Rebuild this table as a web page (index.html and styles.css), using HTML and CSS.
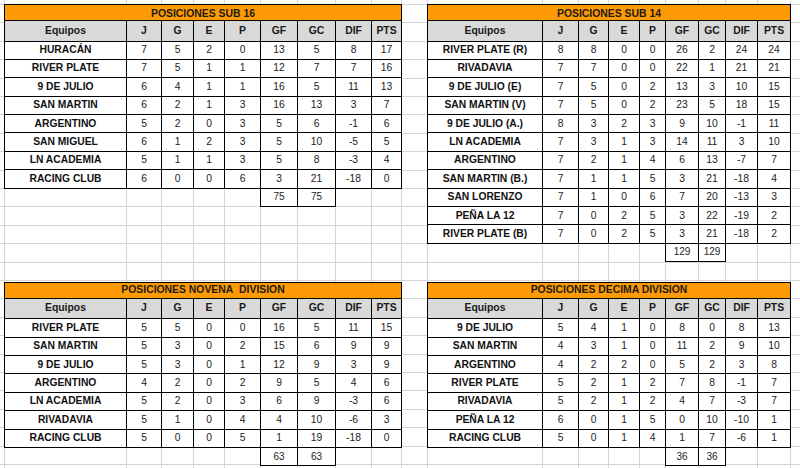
FILE: index.html
```html
<!DOCTYPE html>
<html lang="es">
<head>
<meta charset="utf-8">
<title>Posiciones</title>
<link rel="stylesheet" href="styles.css">
</head>
<body>
<main class="sheet">

  <section class="tbl tbl-l">
    <div class="title title-top">POSICIONES SUB 16</div>
    <div class="hd first">Equipos</div><div class="hd">J</div><div class="hd">G</div><div class="hd">E</div><div class="hd">P</div><div class="hd">GF</div><div class="hd">GC</div><div class="hd">DIF</div><div class="hd">PTS</div>
    <div class="nm">HURACÁN</div><div class="n">7</div><div class="n">5</div><div class="n">2</div><div class="n">0</div><div class="n">13</div><div class="n">5</div><div class="n">8</div><div class="n">17</div>
    <div class="nm">RIVER PLATE</div><div class="n">7</div><div class="n">5</div><div class="n">1</div><div class="n">1</div><div class="n">12</div><div class="n">7</div><div class="n">7</div><div class="n">16</div>
    <div class="nm">9 DE JULIO</div><div class="n">6</div><div class="n">4</div><div class="n">1</div><div class="n">1</div><div class="n">16</div><div class="n">5</div><div class="n">11</div><div class="n">13</div>
    <div class="nm">SAN MARTIN</div><div class="n">6</div><div class="n">2</div><div class="n">1</div><div class="n">3</div><div class="n">16</div><div class="n">13</div><div class="n">3</div><div class="n">7</div>
    <div class="nm">ARGENTINO</div><div class="n">5</div><div class="n">2</div><div class="n">0</div><div class="n">3</div><div class="n">5</div><div class="n">6</div><div class="n">-1</div><div class="n">6</div>
    <div class="nm">SAN MIGUEL</div><div class="n">6</div><div class="n">1</div><div class="n">2</div><div class="n">3</div><div class="n">5</div><div class="n">10</div><div class="n">-5</div><div class="n">5</div>
    <div class="nm">LN ACADEMIA</div><div class="n">5</div><div class="n">1</div><div class="n">1</div><div class="n">3</div><div class="n">5</div><div class="n">8</div><div class="n">-3</div><div class="n">4</div>
    <div class="nm">RACING CLUB</div><div class="n">6</div><div class="n">0</div><div class="n">0</div><div class="n">6</div><div class="n">3</div><div class="n">21</div><div class="n">-18</div><div class="n">0</div>
    <div class="tot tot-gf">75</div><div class="tot">75</div>
  </section>

  <section class="tbl tbl-r">
    <div class="title title-top">POSICIONES SUB 14</div>
    <div class="hd first">Equipos</div><div class="hd">J</div><div class="hd">G</div><div class="hd">E</div><div class="hd">P</div><div class="hd">GF</div><div class="hd">GC</div><div class="hd">DIF</div><div class="hd">PTS</div>
    <div class="nm">RIVER PLATE (R)</div><div class="n">8</div><div class="n">8</div><div class="n">0</div><div class="n">0</div><div class="n">26</div><div class="n">2</div><div class="n">24</div><div class="n">24</div>
    <div class="nm">RIVADAVIA</div><div class="n">7</div><div class="n">7</div><div class="n">0</div><div class="n">0</div><div class="n">22</div><div class="n">1</div><div class="n">21</div><div class="n">21</div>
    <div class="nm">9 DE JULIO (E)</div><div class="n">7</div><div class="n">5</div><div class="n">0</div><div class="n">2</div><div class="n">13</div><div class="n">3</div><div class="n">10</div><div class="n">15</div>
    <div class="nm">SAN MARTIN (V)</div><div class="n">7</div><div class="n">5</div><div class="n">0</div><div class="n">2</div><div class="n">23</div><div class="n">5</div><div class="n">18</div><div class="n">15</div>
    <div class="nm">9 DE JULIO (A.)</div><div class="n">8</div><div class="n">3</div><div class="n">2</div><div class="n">3</div><div class="n">9</div><div class="n">10</div><div class="n">-1</div><div class="n">11</div>
    <div class="nm">LN ACADEMIA</div><div class="n">7</div><div class="n">3</div><div class="n">1</div><div class="n">3</div><div class="n">14</div><div class="n">11</div><div class="n">3</div><div class="n">10</div>
    <div class="nm">ARGENTINO</div><div class="n">7</div><div class="n">2</div><div class="n">1</div><div class="n">4</div><div class="n">6</div><div class="n">13</div><div class="n">-7</div><div class="n">7</div>
    <div class="nm">SAN MARTIN (B.)</div><div class="n">7</div><div class="n">1</div><div class="n">1</div><div class="n">5</div><div class="n">3</div><div class="n">21</div><div class="n">-18</div><div class="n">4</div>
    <div class="nm">SAN LORENZO</div><div class="n">7</div><div class="n">1</div><div class="n">0</div><div class="n">6</div><div class="n">7</div><div class="n">20</div><div class="n">-13</div><div class="n">3</div>
    <div class="nm">PEÑA LA 12</div><div class="n">7</div><div class="n">0</div><div class="n">2</div><div class="n">5</div><div class="n">3</div><div class="n">22</div><div class="n">-19</div><div class="n">2</div>
    <div class="nm">RIVER PLATE (B)</div><div class="n">7</div><div class="n">0</div><div class="n">2</div><div class="n">5</div><div class="n">3</div><div class="n">21</div><div class="n">-18</div><div class="n">2</div>
    <div class="tot tot-gf">129</div><div class="tot">129</div>
  </section>

  <section class="tbl tbl-l">
    <div class="title">POSICIONES NOVENA&nbsp; DIVISION</div>
    <div class="hd first">Equipos</div><div class="hd">J</div><div class="hd">G</div><div class="hd">E</div><div class="hd">P</div><div class="hd">GF</div><div class="hd">GC</div><div class="hd">DIF</div><div class="hd">PTS</div>
    <div class="nm">RIVER PLATE</div><div class="n">5</div><div class="n">5</div><div class="n">0</div><div class="n">0</div><div class="n">16</div><div class="n">5</div><div class="n">11</div><div class="n">15</div>
    <div class="nm">SAN MARTIN</div><div class="n">5</div><div class="n">3</div><div class="n">0</div><div class="n">2</div><div class="n">15</div><div class="n">6</div><div class="n">9</div><div class="n">9</div>
    <div class="nm">9 DE JULIO</div><div class="n">5</div><div class="n">3</div><div class="n">0</div><div class="n">1</div><div class="n">12</div><div class="n">9</div><div class="n">3</div><div class="n">9</div>
    <div class="nm">ARGENTINO</div><div class="n">4</div><div class="n">2</div><div class="n">0</div><div class="n">2</div><div class="n">9</div><div class="n">5</div><div class="n">4</div><div class="n">6</div>
    <div class="nm">LN ACADEMIA</div><div class="n">5</div><div class="n">2</div><div class="n">0</div><div class="n">3</div><div class="n">6</div><div class="n">9</div><div class="n">-3</div><div class="n">6</div>
    <div class="nm">RIVADAVIA</div><div class="n">5</div><div class="n">1</div><div class="n">0</div><div class="n">4</div><div class="n">4</div><div class="n">10</div><div class="n">-6</div><div class="n">3</div>
    <div class="nm">RACING CLUB</div><div class="n">5</div><div class="n">0</div><div class="n">0</div><div class="n">5</div><div class="n">1</div><div class="n">19</div><div class="n">-18</div><div class="n">0</div>
    <div class="tot tot-gf">63</div><div class="tot">63</div>
  </section>

  <section class="tbl tbl-r">
    <div class="title">POSICIONES DECIMA DIVISION</div>
    <div class="hd first">Equipos</div><div class="hd">J</div><div class="hd">G</div><div class="hd">E</div><div class="hd">P</div><div class="hd">GF</div><div class="hd">GC</div><div class="hd">DIF</div><div class="hd">PTS</div>
    <div class="nm">9 DE JULIO</div><div class="n">5</div><div class="n">4</div><div class="n">1</div><div class="n">0</div><div class="n">8</div><div class="n">0</div><div class="n">8</div><div class="n">13</div>
    <div class="nm">SAN MARTIN</div><div class="n">4</div><div class="n">3</div><div class="n">1</div><div class="n">0</div><div class="n">11</div><div class="n">2</div><div class="n">9</div><div class="n">10</div>
    <div class="nm">ARGENTINO</div><div class="n">4</div><div class="n">2</div><div class="n">2</div><div class="n">0</div><div class="n">5</div><div class="n">2</div><div class="n">3</div><div class="n">8</div>
    <div class="nm">RIVER PLATE</div><div class="n">5</div><div class="n">2</div><div class="n">1</div><div class="n">2</div><div class="n">7</div><div class="n">8</div><div class="n">-1</div><div class="n">7</div>
    <div class="nm">RIVADAVIA</div><div class="n">5</div><div class="n">2</div><div class="n">1</div><div class="n">2</div><div class="n">4</div><div class="n">7</div><div class="n">-3</div><div class="n">7</div>
    <div class="nm">PEÑA LA 12</div><div class="n">6</div><div class="n">0</div><div class="n">1</div><div class="n">5</div><div class="n">0</div><div class="n">10</div><div class="n">-10</div><div class="n">1</div>
    <div class="nm">RACING CLUB</div><div class="n">5</div><div class="n">0</div><div class="n">1</div><div class="n">4</div><div class="n">1</div><div class="n">7</div><div class="n">-6</div><div class="n">1</div>
    <div class="tot tot-gf">36</div><div class="tot">36</div>
  </section>

</main>
</body>
</html>
```

FILE: styles.css
```css
* {
  box-sizing: border-box;
}

html,
body {
  margin: 0;
  padding: 0;
}

body {
  width: 800px;
  height: 468px;
  overflow: hidden;
  background: #ffffff;
  font-family: "Liberation Sans", Arial, sans-serif;
  color: #161616;
}

.sheet {
  width: 800px;
  height: 468px;
  padding: 4px 0 0 4px;
  display: grid;
  grid-template-columns: 398px 364px;
  grid-template-rows: 277.7px auto;
  column-gap: 25px;
  align-items: start;
  background-color: #ffffff;
  background-image:
    repeating-linear-gradient(to bottom,
      transparent 0 4px, #d5d5d5 4px 5px, transparent 5px 18.4px),
    linear-gradient(to right,
      transparent 0 4px, #d5d5d5 4px 5px,
      transparent 5px 126px, #d5d5d5 126px 127px,
      transparent 127px 161px, #d5d5d5 161px 162px,
      transparent 162px 193px, #d5d5d5 193px 194px,
      transparent 194px 224px, #d5d5d5 224px 225px,
      transparent 225px 260px, #d5d5d5 260px 261px,
      transparent 261px 297px, #d5d5d5 297px 298px,
      transparent 298px 335px, #d5d5d5 335px 336px,
      transparent 336px 371px, #d5d5d5 371px 372px,
      transparent 372px 401px, #d5d5d5 401px 402px,
      transparent 402px 427px, #d5d5d5 427px 428px,
      transparent 428px 542px, #d5d5d5 542px 543px,
      transparent 543px 578px, #d5d5d5 578px 579px,
      transparent 579px 608px, #d5d5d5 608px 609px,
      transparent 609px 639px, #d5d5d5 639px 640px,
      transparent 640px 665px, #d5d5d5 665px 666px,
      transparent 666px 698px, #d5d5d5 698px 699px,
      transparent 699px 725px, #d5d5d5 725px 726px,
      transparent 726px 757px, #d5d5d5 757px 758px,
      transparent 758px 790px, #d5d5d5 790px 791px,
      transparent 791px 800px);
  background-repeat: no-repeat;
  background-size: 100% 100%;
}

.tbl {
  display: grid;
  grid-template-rows: 17px 20.5px;
  grid-auto-rows: 18.4px;
}

.tbl-l {
  grid-template-columns: 123px 35px 32px 31px 36px 37px 38px 36px 30px;
}

.tbl-r {
  grid-template-columns: 116px 36px 30px 31px 26px 33px 27px 32px 33px;
}

.title,
.hd,
.nm,
.n,
.tot {
  display: flex;
  align-items: center;
  justify-content: center;
  white-space: nowrap;
  line-height: 1;
  border-right: 1px solid #000;
  border-bottom: 1px solid #000;
}

.title {
  grid-column: 1 / -1;
  background: #fd9a05;
  border: 1px solid #000;
  font-size: 10.4px;
  font-weight: bold;
  color: #1e1a14;
}

.title-top {
  padding-top: 3px;
}

.hd {
  background: #d9d9d9;
  font-size: 10.4px;
  font-weight: bold;
  color: #1a1a1a;
}

.hd.first,
.nm {
  border-left: 1px solid #000;
}

.nm {
  background: #fff;
  font-size: 10.3px;
  font-weight: bold;
  color: #111;
}

.n {
  background: #fff;
  font-size: 10.3px;
  color: #222;
}

.tot {
  background: #fff;
  font-size: 10px;
  color: #222;
}

.tot-gf {
  grid-column: 6;
  margin-left: -1px;
  border-left: 1px solid #000;
}
```
